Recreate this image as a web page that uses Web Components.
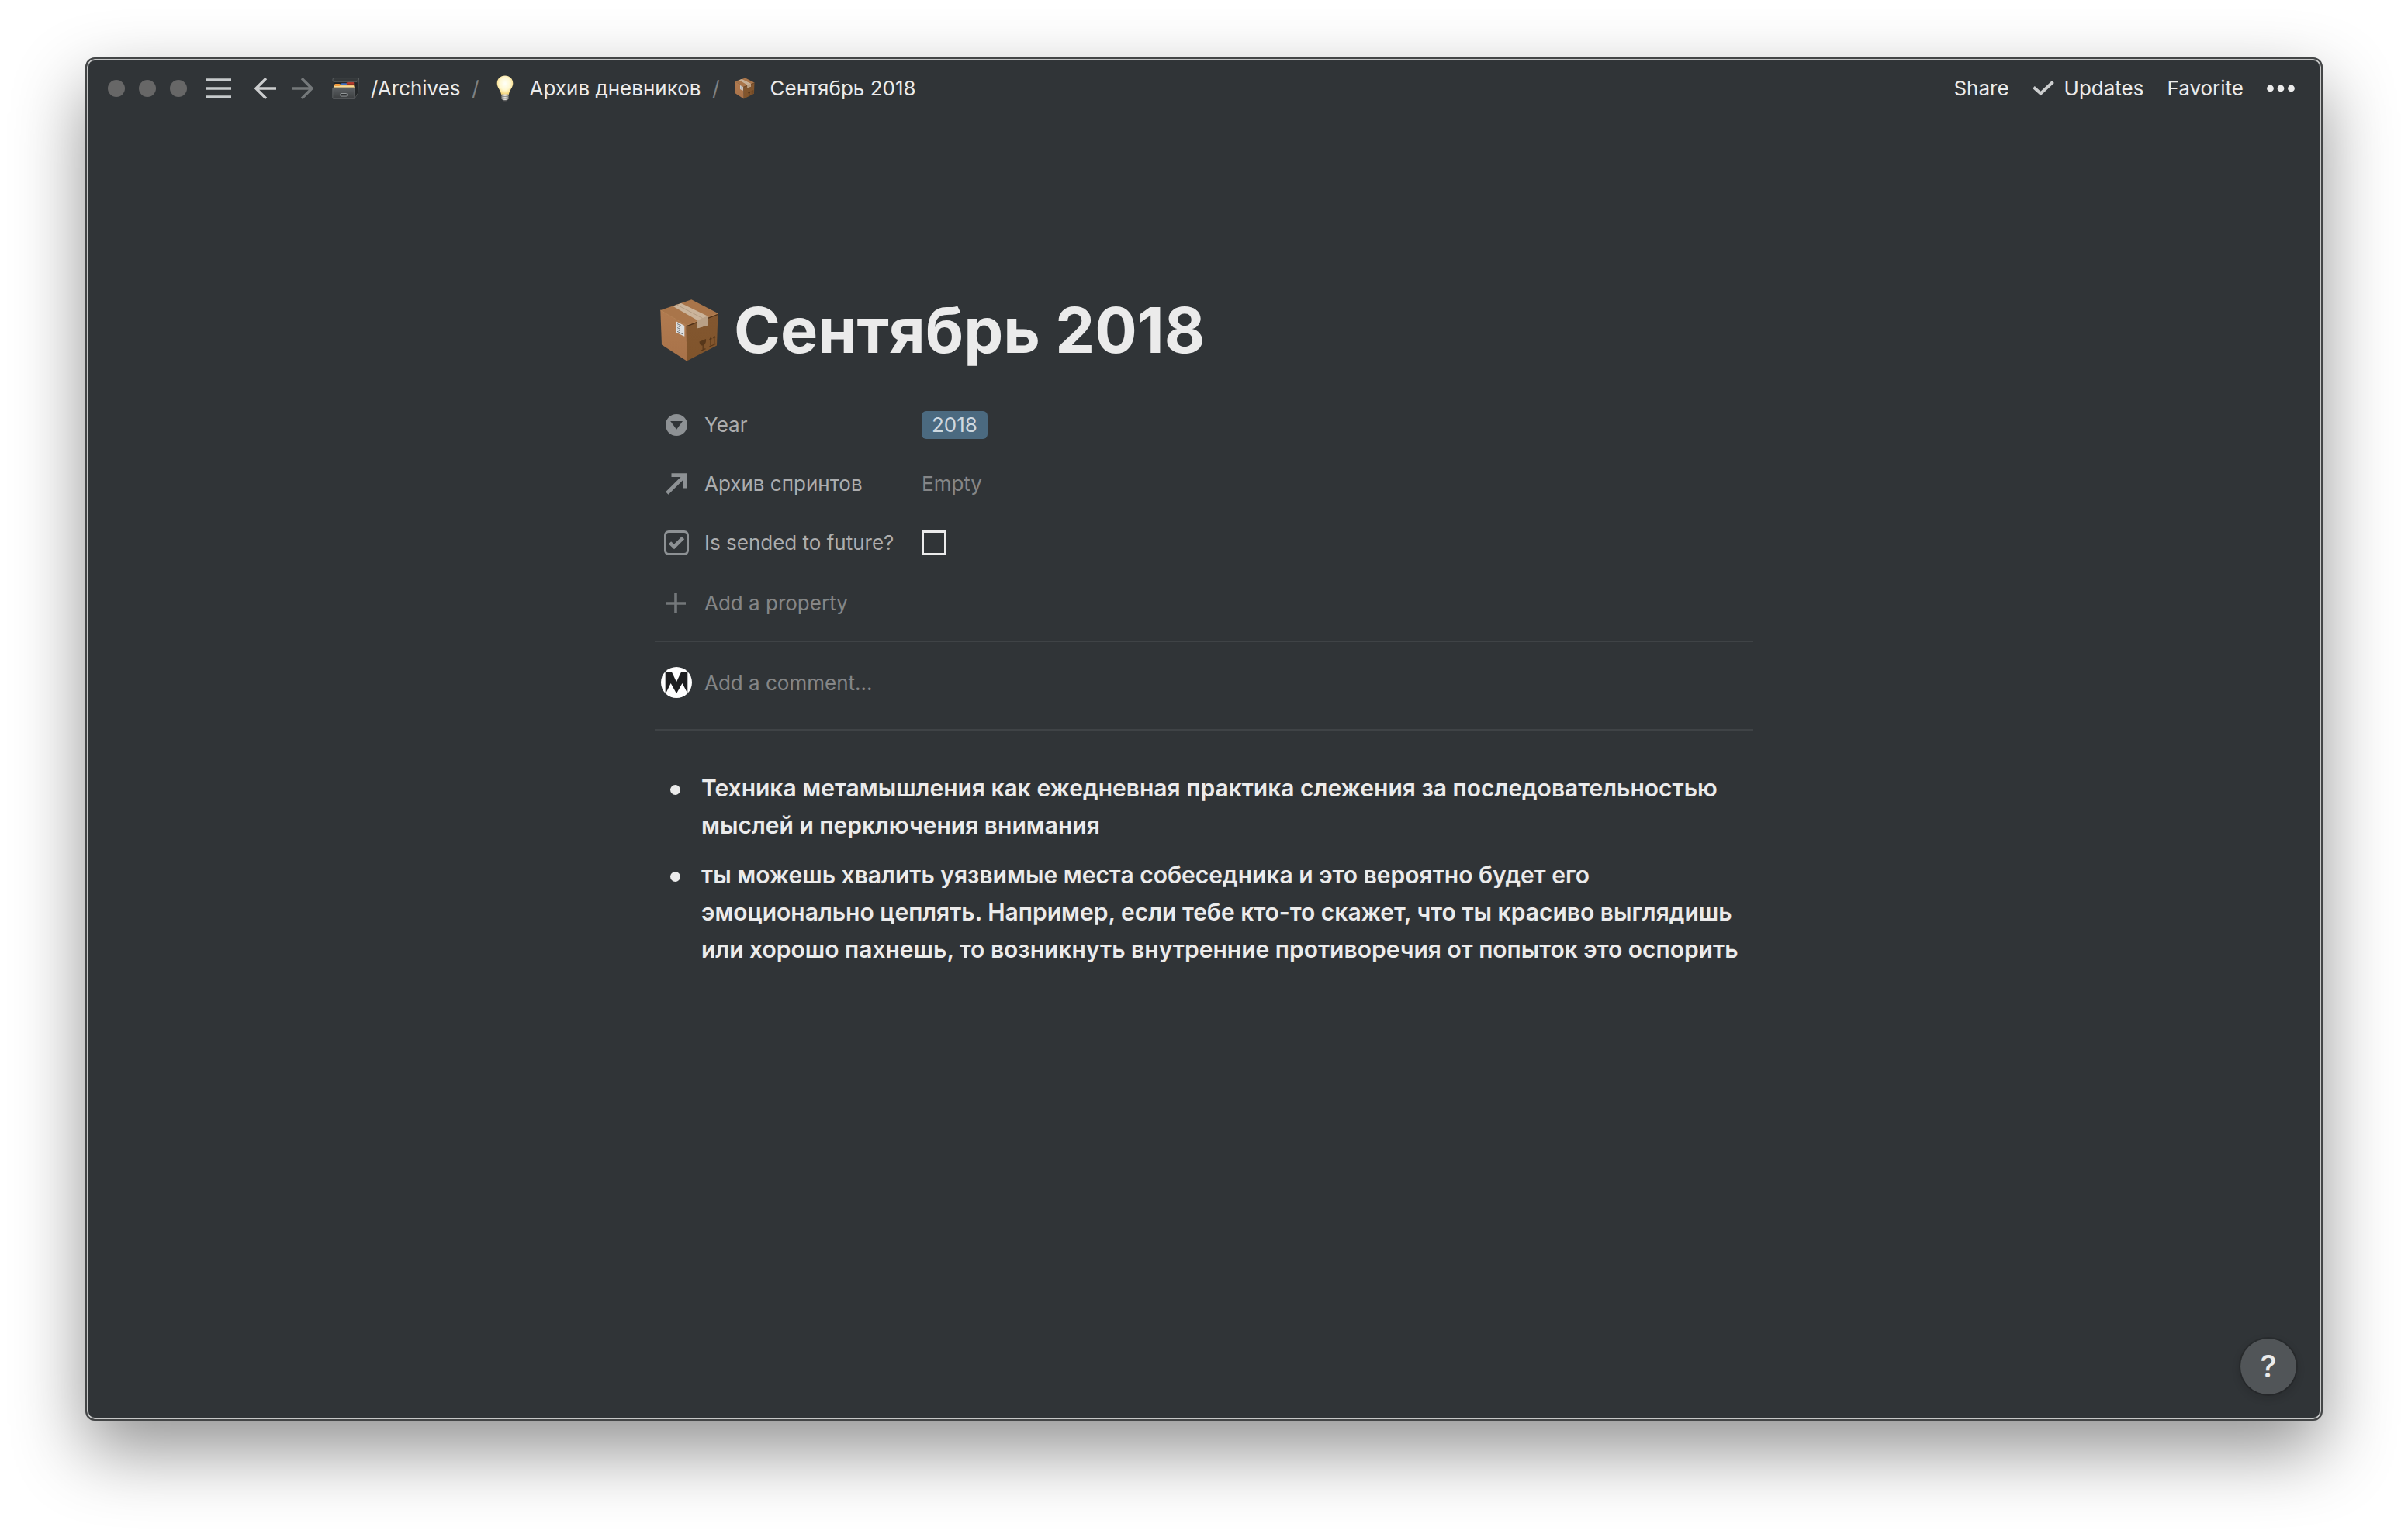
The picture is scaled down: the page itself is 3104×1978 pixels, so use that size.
<!DOCTYPE html>
<html lang="ru">
<head>
<meta charset="utf-8">
<title>Сентябрь 2018</title>
<style>
  :root {
    --bg: #303437;
    --text: #ebebeb;
    --label: #acadae;
    --muted: #858687;
    --rule: #3f4346;
  }
  body {
    margin: 0;
    padding: 74px 110px 146px;
    box-sizing: border-box;
    min-height: 100vh;
    display: flex;
    flex-direction: column;
    background: #fff;
    color: var(--text);
    font: 400 26px/36px Inter, "Liberation Sans", sans-serif;
  }
</style>
</head>
<body>
<app-window>
  <top-bar slot="bar"></top-bar>
  <page-title>Сентябрь 2018</page-title>
  <page-properties></page-properties>
  <page-comment></page-comment>
  <page-notes>
    <note-item role="listitem">Техника метамышления как ежедневная практика слежения за последовательностью мыслей и перключения внимания</note-item>
    <note-item role="listitem">ты можешь хвалить уязвимые места собеседника и это вероятно будет его эмоционально цеплять. Например, если тебе кто-то скажет, что ты красиво выглядишь или хорошо пахнешь, то возникнуть внутренние противоречия от попыток это оспорить</note-item>
  </page-notes>
</app-window>

<script>
const define = (name, html, setup) => {
  const template = document.createElement('template');
  template.innerHTML = html;
  customElements.define(name, class extends HTMLElement {
    constructor() {
      super();
      this.attachShadow({ mode: 'open' }).append(template.content.cloneNode(true));
    }
    connectedCallback() {
      if (setup) setup(this, this.shadowRoot);
    }
  });
};

// Each icon: [width, height, viewBox, content]
const ICONS = {
  menu: [32, 28, '0 0 32 28', '<path d="M0 3h32M0 14h32M0 25h32" stroke="#c6cacc" stroke-width="3.6"/>'],
  back: [28, 28, '0 0 28 28', '<path d="M2 14h26M15 1L2 14l13 13" fill="none" stroke="#cbcdce" stroke-width="3.4"/>'],
  forward: [28, 28, '0 0 28 28', '<path d="M26 14H0M13 1l13 13-13 13" fill="none" stroke="#74787a" stroke-width="3.4"/>'],
  check: [28, 20, '0 0 28 20', '<path d="M1.500 8.500l9 8L26.500 1.500" fill="none" stroke="#cbcdce" stroke-width="4"/>'],
  more: [36, 10, '0 0 36 10', '<g fill="#ebebeb"><circle cx="4.500" cy="5" r="4.400"/><circle cx="18" cy="5" r="4.400"/><circle cx="31.500" cy="5" r="4.400"/></g>'],
  select: [28, 28, '0 0 28 28', '<circle cx="14" cy="14" r="14" fill="#8d9194"/><path d="M6.200 9h15.800l-7.900 10.700z" fill="#303437"/>'],
  relation: [28, 28, '0 0 28 28', '<path d="M7.500 2.600H25.400V19.500M1.800 26L24.500 3.500" fill="none" stroke="#8d9194" stroke-width="4.800"/>'],
  checkbox: [32, 32, '0 0 32 32', '<rect x="1.500" y="1.500" width="29" height="29" rx="4.500" fill="none" stroke="#8d9194" stroke-width="3"/><path d="M7.500 15.800l5.500 5.200L24.500 9.500" fill="none" stroke="#8d9194" stroke-width="4.600"/>'],
  plus: [28, 28, '0 0 28 28', '<path d="M13 1v26M0 14h26" stroke="#73777a" stroke-width="3.600"/>'],
  avatar: [40, 40, '0 0 40 40', '<circle cx="20" cy="20" r="20" fill="#fff"/><path d="M5.700 6h8L20 19.300 26.300 6h8v28L27.500 21 20 34.300 12.700 21 6.200 34H5.700z" fill="#1d1e20"/>'],
  cabinet: [36, 28, '0 0 36 28', `
    <defs><linearGradient id="f" x2="0" y2="1"><stop stop-color="#5c6063"/><stop offset="1" stop-color="#3b3e40"/></linearGradient></defs>
    <path d="M29 12L34.500 1.500 33.500 20 29 27.500z" fill="#25282a" stroke="#55595b" stroke-width=".8"/>
    <path d="M3 5h30l-3 9H3z" fill="#222426"/>
    <path d="M18 7.500l2-1.700h8l.5 3H18z" fill="#b5392a"/>
    <path d="M11 9l1.500-1.800h6l1 2.500H11z" fill="#3f6fc4"/>
    <path d="M2 13l1.500-4.500h7l1 .8H28l1 3.700z" fill="#f0c878"/>
    <path d="M3.500 9l1-1h5l1 1.500-1 1.500H3.500z" fill="#f39a3c"/>
    <path d="M3 11.800h25" stroke="#fae0a4"/>
    <path d="M1 1.500L3 .6h30.500l1 1-2.500 4H2.500L1 4.500z" fill="#35393b" stroke="#676b6d" stroke-width=".7"/>
    <rect x=".8" y="13" width="28.200" height="14.300" rx=".8" fill="url(#f)" stroke="#6b6f71" stroke-width=".7"/>
    <rect x="10.800" y="20.500" width="8.500" height="3.500" rx=".8" fill="#2c2f31" stroke="#94989a"/>`],
  bulb: [36, 36, '0 0 36 36', `
    <defs><radialGradient id="g" cx=".5" cy=".42" r=".6"><stop stop-color="#fffff8"/><stop offset=".55" stop-color="#fff8d2"/><stop offset="1" stop-color="#f3cf6b"/></radialGradient>
    <linearGradient id="b"><stop stop-color="#8b8b88"/><stop offset=".5" stop-color="#e4e2dc"/><stop offset="1" stop-color="#8b8b88"/></linearGradient></defs>
    <path d="M18 1.500c6 0 10.300 4.300 10.300 10 0 5.200-4.300 8-5.500 14.500h-9.600C12 19.500 7.700 16.700 7.700 11.500c0-5.700 4.300-10 10.300-10z" fill="url(#g)"/>
    <path d="M13.500 25.500h9v6l-2 2h-5l-2-2z" fill="url(#b)"/>
    <path d="M13.500 28.500h9M13.500 31h9" stroke="#858580" stroke-width=".8"/>
    <path d="M15.500 33.500h5l-1 1.500h-3z" fill="#414345"/>`],
  box: [76, 82, '7 9 76 82', `
    <defs><linearGradient id="l" x2="0" y2="1"><stop stop-color="#b17b50"/><stop offset="1" stop-color="#a87249"/></linearGradient>
    <linearGradient id="r" x2="0" y2="1"><stop stop-color="#835730"/><stop offset="1" stop-color="#80542b"/></linearGradient></defs>
    <path d="M7.300 24L47.300 10.300 81.500 28 40.700 43.500z" fill="#a9754a"/>
    <path d="M7.300 24l33.400 19.500.6 46L9 68.500z" fill="url(#l)"/>
    <path d="M40.700 43.500L81.500 28 80 69.500l-38.700 20z" fill="url(#r)"/>
    <path d="M7.300 24l33.400 19.500L81.500 28" fill="none" stroke="#bd8858" stroke-width=".9"/>
    <path d="M41.500 44.600L81.300 29.500" stroke="#4d3019" stroke-width="1.300"/>
    <path d="M23.300 18.700L34 15 68 31.500v12L55 47.200V37z" fill="#cbb49b"/>
    <path d="M55 37l13-5.500v12L55 47.200z" fill="#b9a086"/>
    <path d="M28.500 17L61.500 34.300" stroke="#b39b82" stroke-width="1"/>
    <path d="M27.300 38.300l11 5.700v13.800l-10.600-5z" fill="#dedfe0"/>
    <path d="M29 41.500l5 2.600M29 44l4 2M29 46.500l4 2M29 49l4 2M29 51.300l7 3.500" stroke="#6f7478" stroke-width="1"/>
    <path d="M57.500 64.500l8.500-3.500c.5 4.500-1.300 7.200-3.600 8.200-2.600 1-4.700-.8-4.900-4.700z" fill="#57371a"/>
    <path d="M62.200 68v7M59 76.500l6.500-2.800" stroke="#57371a" stroke-width="1.300"/>
    <path d="M72 69.500V60M76.800 67.500V58M70.300 71l8.700-3.800" stroke="#57371a" stroke-width="1.200"/>
    <path d="M69.800 62.500l2.200-3.800 2 2.200zM74.700 60.500l2.100-3.800 2 2.200z" fill="#57371a"/>`],
};

define('ui-icon', '', (host, root) => {
  const [w, h, box, content] = ICONS[host.getAttribute('name')];
  const height = Number(host.getAttribute('height')) || h;
  const width = Math.round(w * height / h);
  root.innerHTML = `
    <style>
      :host { display: inline-flex; flex: none; align-items: center; justify-content: center; }
      svg { display: block; }
    </style>
    <svg width="${width}" height="${height}" viewBox="${box}" aria-hidden="true">${content}</svg>`;
});

define('app-window', `
  <style>
    :host {
      display: flex; flex-direction: column; flex: 1; position: relative;
      box-sizing: border-box; padding: 2px;
      background: var(--bg);
      border: 2px solid #434546; border-radius: 12px;
      box-shadow: inset 0 0 0 2px #c6c7c7, 0 38px 92px rgba(0, 0, 0, .43);
    }
    main {
      width: 100%; max-width: 1416px; box-sizing: border-box;
      margin: 0 auto; padding: 228px 0 120px;
    }
    help-button { position: absolute; right: 32px; bottom: 32px; }
  </style>
  <slot name="bar"></slot>
  <main><slot></slot></main>
  <help-button></help-button>`);

define('help-button', `
  <style>
    button {
      display: flex; align-items: center; justify-content: center;
      width: 72px; height: 72px; padding: 0; border: 0; border-radius: 50%;
      background: #515558; color: var(--text); font: inherit; font-size: 40px; font-weight: 500;
      box-shadow: 0 0 0 2px rgba(15, 15, 15, .2), 0 4px 12px rgba(15, 15, 15, .2);
    }
  </style>
  <button type="button" aria-label="Help">?</button>`);

define('top-bar', `
  <style>
    :host { display: flex; align-items: center; height: 72px; padding: 0 32px 0 25px; }
    .lights { display: flex; gap: 18px; }
    .lights i { width: 22px; height: 22px; border-radius: 50%; background: #676767; }
    button { display: flex; align-items: center; gap: 13px; padding: 0; border: 0; background: none; color: inherit; font: inherit; }
    .menu { margin-left: 25px; }
    .history { display: flex; gap: 20px; margin: 0 24px 0 30px; }
    nav, .actions { display: flex; align-items: center; }
    .actions { gap: 30px; margin-left: auto; }
  </style>
  <div class="lights"><i></i><i></i><i></i></div>
  <button class="menu" type="button" aria-label="Menu"><ui-icon name="menu"></ui-icon></button>
  <div class="history">
    <button type="button" aria-label="Back"><ui-icon name="back"></ui-icon></button>
    <button type="button" aria-label="Forward"><ui-icon name="forward"></ui-icon></button>
  </div>
  <nav>
    <crumb-link icon="cabinet">/Archives</crumb-link>
    <crumb-link icon="bulb">Архив дневников</crumb-link>
    <crumb-link icon="box">Сентябрь 2018</crumb-link>
  </nav>
  <div class="actions">
    <button type="button">Share</button>
    <button type="button"><ui-icon name="check"></ui-icon>Updates</button>
    <button type="button">Favorite</button>
    <button type="button" aria-label="More"><ui-icon name="more"></ui-icon></button>
  </div>`);

define('crumb-link', `
  <style>
    :host { display: flex; align-items: center; white-space: nowrap; }
    a { display: flex; align-items: center; gap: 14px; color: inherit; text-decoration: none; }
    ui-icon { width: 36px; }
    .sep { width: 39px; text-align: center; color: #7f8284; }
    :host(:last-child) .sep { display: none; }
  </style>
  <a href="#"><slot></slot></a><span class="sep">/</span>`, (host, root) => {
  if (root.querySelector('ui-icon')) return;
  const name = host.getAttribute('icon');
  const icon = document.createElement('ui-icon');
  icon.setAttribute('name', name);
  if (name === 'box') icon.setAttribute('height', 28);
  root.querySelector('a').prepend(icon);
});

define('page-title', `
  <style>
    :host { display: flex; align-items: center; gap: 19px; padding-left: 7px; margin-bottom: 36px; }
    h1 { margin: 0; font-size: 81px; line-height: 96px; font-weight: 700; }
  </style>
  <ui-icon name="box"></ui-icon>
  <h1><slot></slot></h1>`);

define('property-row', `
  <style>
    :host { display: flex; align-items: center; min-height: 76px; }
    .icon { display: flex; justify-content: center; flex: none; width: 56px; margin-right: 8px; }
    .label { flex: none; width: 280px; color: var(--label); }
  </style>
  <span class="icon"><slot name="icon"></slot></span>
  <span class="label"><slot name="label"></slot></span>
  <slot></slot>`);

define('page-properties', `
  <style>
    :host { display: block; padding-bottom: 8px; border-bottom: 2px solid var(--rule); }
    .tag { padding: 0 13px; border-radius: 6px; background: #4b6a80; color: #cfd9e0; }
    .empty { color: var(--muted); }
    input {
      appearance: none; width: 32px; height: 32px; margin: 0;
      border: 3px solid var(--text); border-radius: 0; background: none;
    }
    button {
      display: flex; align-items: center; gap: 8px; width: 100%; height: 80px;
      padding: 0; border: 0; background: none; color: var(--muted); font: inherit;
    }
    button ui-icon { width: 56px; }
  </style>
  <property-row>
    <ui-icon slot="icon" name="select"></ui-icon>
    <span slot="label">Year</span>
    <span class="tag">2018</span>
  </property-row>
  <property-row>
    <ui-icon slot="icon" name="relation"></ui-icon>
    <span slot="label">Архив спринтов</span>
    <span class="empty">Empty</span>
  </property-row>
  <property-row>
    <ui-icon slot="icon" name="checkbox"></ui-icon>
    <label slot="label" for="sended">Is sended to future?</label>
    <input id="sended" type="checkbox">
  </property-row>
  <button type="button"><ui-icon name="plus"></ui-icon>Add a property</button>`);

define('page-comment', `
  <style>
    :host { display: block; padding-bottom: 8px; border-bottom: 2px solid var(--rule); }
    label { display: flex; align-items: center; gap: 8px; height: 104px; }
    ui-icon { width: 56px; }
    input {
      flex: 1; min-width: 0; height: 40px; padding: 0; border: 0; outline: 0;
      background: none; color: inherit; font: inherit;
    }
    input::placeholder { color: var(--muted); opacity: 1; }
  </style>
  <label for="comment">
    <ui-icon name="avatar"></ui-icon>
    <input id="comment" type="text" placeholder="Add a comment…" aria-label="Comment">
  </label>`);

define('page-notes', `
  <style>
    :host { display: flex; flex-direction: column; gap: 16px; padding-top: 50px; }
  </style>
  <slot></slot>`, host => host.setAttribute('role', 'list'));

define('note-item', `
  <style>
    :host { display: flex; gap: 8px; font-size: 30px; line-height: 48px; font-weight: 600; }
    .bullet { display: flex; align-items: center; justify-content: center; flex: none; width: 52px; height: 52px; margin-bottom: -4px; }
    .bullet::before { content: ""; width: 13px; height: 13px; border-radius: 50%; background: var(--text); }
  </style>
  <span class="bullet"></span>
  <span><slot></slot></span>`);
</script>
</body>
</html>
